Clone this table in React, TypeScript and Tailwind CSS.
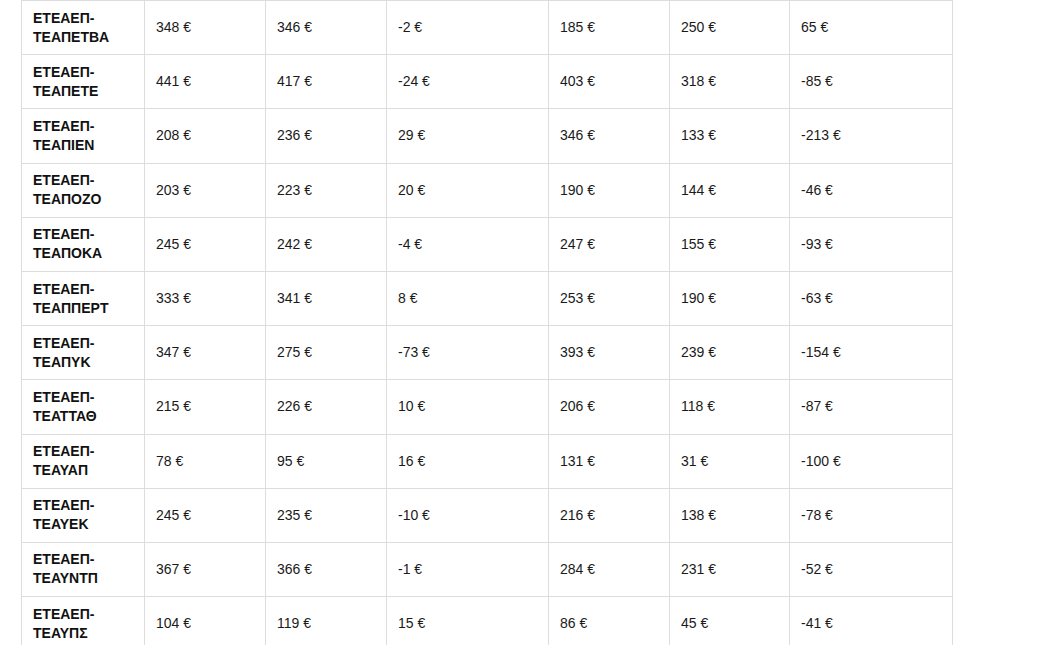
const rows: [string, number[]][] = [
  ['ΤΕΑΠΕΤΒΑ', [348, 346, -2, 185, 250, 65]],
  ['ΤΕΑΠΕΤΕ', [441, 417, -24, 403, 318, -85]],
  ['ΤΕΑΠΙΕΝ', [208, 236, 29, 346, 133, -213]],
  ['ΤΕΑΠΟΖΟ', [203, 223, 20, 190, 144, -46]],
  ['ΤΕΑΠΟΚΑ', [245, 242, -4, 247, 155, -93]],
  ['ΤΕΑΠΠΕΡΤ', [333, 341, 8, 253, 190, -63]],
  ['ΤΕΑΠΥΚ', [347, 275, -73, 393, 239, -154]],
  ['ΤΕΑΤΤΑΘ', [215, 226, 10, 206, 118, -87]],
  ['ΤΕΑΥΑΠ', [78, 95, 16, 131, 31, -100]],
  ['ΤΕΑΥΕΚ', [245, 235, -10, 216, 138, -78]],
  ['ΤΕΑΥΝΤΠ', [367, 366, -1, 284, 231, -52]],
  ['ΤΕΑΥΠΣ', [104, 119, 15, 86, 45, -41]],
];

const widths = ['w-[123px]', 'w-[121px]', 'w-[121px]', 'w-[162px]', 'w-[121px]', 'w-[120px]', 'w-[163px]'];

export default function App() {
  return (
    <div className="min-h-screen bg-white pl-[21px] font-['Liberation_Sans',Arial,sans-serif] text-[14px] leading-[19px] text-[#1a1a1a]">
      <table className="table-fixed border-collapse w-[932px]">
        <colgroup>
          {widths.map((w, i) => (
            <col key={i} className={w} />
          ))}
        </colgroup>
        <tbody>
          {rows.map(([code, vals]) => (
            <tr key={code}>
              <td className="border border-[#dddddd] pl-[11px] pr-3 py-[7.6px] align-middle font-bold text-[#111]">
                ΕΤΕΑΕΠ-{code}
              </td>
              {vals.map((v, i) => (
                <td key={i} className="border border-[#dddddd] pl-[11px] pr-3 py-[7.6px] align-middle">
                  {v} €
                </td>
              ))}
            </tr>
          ))}
        </tbody>
      </table>
    </div>
  );
}
